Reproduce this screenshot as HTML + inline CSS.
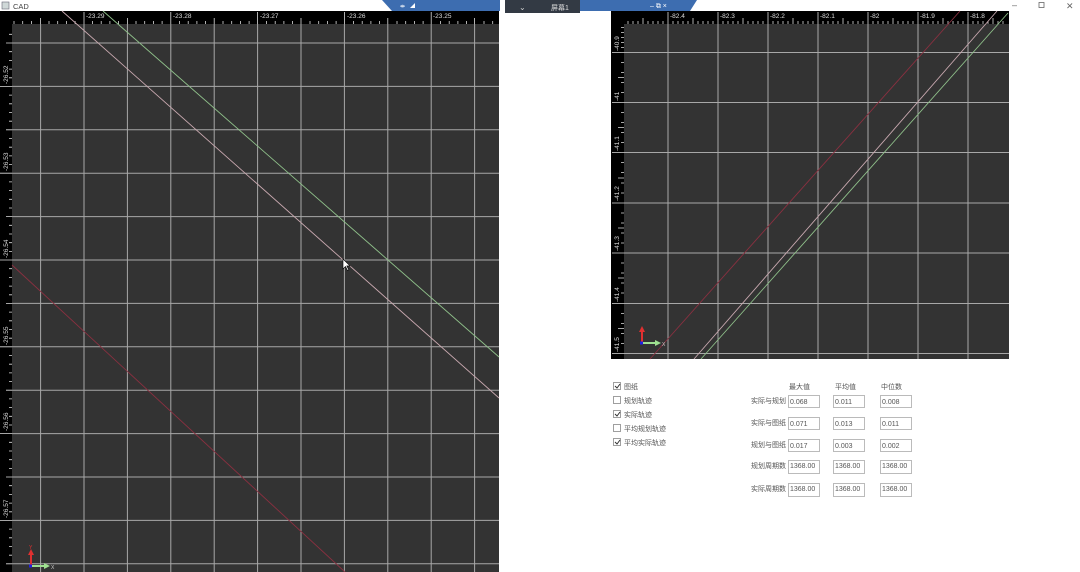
<!DOCTYPE html>
<html><head><meta charset="utf-8"><style>
html,body{margin:0;padding:0;background:#fff;width:1080px;height:572px;overflow:hidden;font-family:"Liberation Sans","Noto Sans CJK SC",sans-serif}
svg{display:block}
</style></head><body>
<svg width="1080" height="572" viewBox="0 0 1080 572" xmlns="http://www.w3.org/2000/svg" font-family="Liberation Sans, Noto Sans CJK SC, sans-serif">
<rect width="1080" height="572" fill="#fff"/>
<!-- title bar -->
<rect x="2" y="2" width="7" height="7" fill="#cfd8d8" stroke="#667" stroke-width="0.6"/>
<text x="13" y="9" font-size="7.5" fill="#444">CAD</text>
<text x="1012" y="8" font-size="9" fill="#666">–</text>
<rect x="1039" y="2.5" width="5" height="5" fill="none" stroke="#666" stroke-width="0.8"/>
<text x="1066" y="9" font-size="9" fill="#666">✕</text>

<!-- LEFT PANEL -->
<rect x="0" y="11" width="499" height="561" fill="#333"/>
<rect x="0" y="11" width="499" height="13" fill="#000"/>
<rect x="0" y="11" width="12" height="561" fill="#000"/>
<g stroke="#a8a8a8" stroke-width="1">
<path d="M40.6 24V572M84 24V572M127.4 24V572M170.8 24V572M214.2 24V572M257.6 24V572M301 24V572M344.4 24V572M387.8 24V572M431.2 24V572M474.6 24V572"/>
<path d="M12 43H499M12 86.4H499M12 129.8H499M12 173.2H499M12 216.6H499M12 260H499M12 303.4H499M12 346.8H499M12 390.2H499M12 433.6H499M12 477H499M12 520.4H499M12 563.8H499"/>
</g>
<!-- top ruler ticks -->
<g stroke="#ddd" stroke-width="0.8">
<path id="tk" d="M14 24v-3M22.7 24v-3M31.4 24v-3M40.6 24v-6M49 24v-3M57.7 24v-3M66.4 24v-3M75.1 24v-3M84 24v-12M92.5 24v-3M101.2 24v-3M109.9 24v-3M118.6 24v-3M127.4 24v-6M136 24v-3M144.7 24v-3M153.4 24v-3M162.1 24v-3M170.8 24v-12M179.5 24v-3M188.2 24v-3M196.9 24v-3M205.6 24v-3M214.2 24v-6M223 24v-3M231.7 24v-3M240.4 24v-3M249.1 24v-3M257.6 24v-12M266.5 24v-3M275.2 24v-3M283.9 24v-3M292.6 24v-3M301 24v-6M310 24v-3M318.7 24v-3M327.4 24v-3M336.1 24v-3M344.4 24v-12M353.5 24v-3M362.2 24v-3M370.9 24v-3M379.6 24v-3M387.8 24v-6M397 24v-3M405.7 24v-3M414.4 24v-3M423.1 24v-3M431.2 24v-12M440.5 24v-3M449.2 24v-3M457.9 24v-3M466.6 24v-3M474.6 24v-6M484 24v-3M492.7 24v-3"/>
<path d="M12 34.3h-3M12 43h-6M12 51.7h-3M12 60.4h-3M12 69.1h-3M12 77.8h-3M12 86.4h-12M12 95.1h-3M12 103.8h-3M12 112.5h-3M12 121.2h-3M12 129.8h-6M12 138.5h-3M12 147.2h-3M12 155.9h-3M12 164.6h-3M12 173.2h-12M12 181.9h-3M12 190.6h-3M12 199.3h-3M12 208h-3M12 216.6h-6M12 225.3h-3M12 234h-3M12 242.7h-3M12 251.4h-3M12 260h-12M12 268.7h-3M12 277.4h-3M12 286.1h-3M12 294.8h-3M12 303.4h-6M12 312.1h-3M12 320.8h-3M12 329.5h-3M12 338.2h-3M12 346.8h-12M12 355.5h-3M12 364.2h-3M12 372.9h-3M12 381.6h-3M12 390.2h-6M12 398.9h-3M12 407.6h-3M12 416.3h-3M12 425h-3M12 433.6h-12M12 442.3h-3M12 451h-3M12 459.7h-3M12 468.4h-3M12 477h-6M12 485.7h-3M12 494.4h-3M12 503.1h-3M12 511.8h-3M12 520.4h-12M12 529.1h-3M12 537.8h-3M12 546.5h-3M12 555.2h-3M12 563.8h-6"/>
</g>
<g fill="#ddd" font-size="6.5">
<text x="86" y="18">-23.29</text><text x="173" y="18">-23.28</text><text x="260" y="18">-23.27</text><text x="347" y="18">-23.26</text><text x="433" y="18">-23.25</text>
<g transform="rotate(-90)"><text x="-84" y="8">-26.52</text><text x="-171" y="8">-26.53</text><text x="-258" y="8">-26.54</text><text x="-345" y="8">-26.55</text><text x="-431" y="8">-26.56</text><text x="-518" y="8">-26.57</text></g>
</g>
<!-- lines -->
<line x1="62" y1="11" x2="499" y2="398" stroke="#c9a9b0" stroke-width="0.9"/>
<line x1="103" y1="11" x2="499" y2="357" stroke="#8fc08a" stroke-width="0.9"/>
<line x1="12" y1="265" x2="345" y2="572" stroke="#8a3040" stroke-width="0.9"/>
<!-- axis gizmo -->
<path d="M31 566V553" stroke="#e03030" stroke-width="2"/><path d="M28 555l3-6 3 6z" fill="#e03030"/>
<path d="M32 566H46" stroke="#9fe090" stroke-width="2"/><path d="M44 563l6 3-6 3z" fill="#9fe090"/>
<rect x="29" y="564.5" width="3" height="3" fill="#2020e0"/>
<text x="51" y="569" font-size="5" fill="#ccc">X</text><text x="29" y="549" font-size="5" fill="#e03030">Y</text>
<!-- cursor -->
<path d="M343 259v10l2.5-2.5 2 4 1.3-.6-2-4H350z" fill="#fff" stroke="#000" stroke-width="0.6"/>

<!-- remote bar -->
<path d="M382 0H500V11H392z" fill="#3d6db0"/>
<path d="M580 0H697L690 11H580z" fill="#3d6db0"/>
<rect x="505" y="0" width="75" height="13" fill="#333a44"/>
<text x="519" y="10" font-size="8" fill="#ccc">⌄</text>
<text x="551" y="10" font-size="7" fill="#ddd">屏幕1</text>
<text x="400" y="8" font-size="6" fill="#fff">⇹</text><path d="M410 8l5-5v5z" fill="#fff"/>
<text x="650" y="8" font-size="7" fill="#fff">–  ⧉  ×</text>

<!-- RIGHT PANEL -->
<rect x="611" y="11" width="398" height="348" fill="#333"/>
<rect x="611" y="11" width="398" height="13" fill="#000"/>
<rect x="611" y="11" width="13" height="348" fill="#000"/>
<g stroke="#a8a8a8" stroke-width="1">
<path d="M668 24V359M718 24V359M768 24V359M818 24V359M868 24V359M918 24V359M968 24V359"/>
<path d="M624 52.5H1009M624 102.5H1009M624 152.5H1009M624 203H1009M624 253H1009M624 303.5H1009M624 353.5H1009"/>
</g>
<g stroke="#ddd" stroke-width="0.8">
<path d="M628 24v-3M633 24v-3M638 24v-3M643 24v-6M648 24v-3M653 24v-3M658 24v-3M663 24v-3M668 24v-12M673 24v-3M678 24v-3M683 24v-3M688 24v-3M693 24v-6M698 24v-3M703 24v-3M708 24v-3M713 24v-3M718 24v-12M723 24v-3M728 24v-3M733 24v-3M738 24v-3M743 24v-6M748 24v-3M753 24v-3M758 24v-3M763 24v-3M768 24v-12M773 24v-3M778 24v-3M783 24v-3M788 24v-3M793 24v-6M798 24v-3M803 24v-3M808 24v-3M813 24v-3M818 24v-12M823 24v-3M828 24v-3M833 24v-3M838 24v-3M843 24v-6M848 24v-3M853 24v-3M858 24v-3M863 24v-3M868 24v-12M873 24v-3M878 24v-3M883 24v-3M888 24v-3M893 24v-6M898 24v-3M903 24v-3M908 24v-3M913 24v-3M918 24v-12M923 24v-3M928 24v-3M933 24v-3M938 24v-3M943 24v-6M948 24v-3M953 24v-3M958 24v-3M963 24v-3M968 24v-12M973 24v-3M978 24v-3M983 24v-3M988 24v-3M993 24v-6M998 24v-3M1003 24v-3"/>
<path d="M624 27.5h-3M624 32.5h-3M624 37.5h-3M624 42.5h-3M624 47.5h-3M624 52.5h-12M624 62.5h-3M624 72.5h-3M624 77.5h-6M624 82.5h-3M624 92.5h-3M624 102.5h-12M624 112.5h-3M624 122.5h-3M624 127.5h-6M624 132.5h-3M624 142.5h-3M624 152.5h-12M624 162.5h-3M624 172.5h-3M624 178h-6M624 183h-3M624 193h-3M624 203h-12M624 213h-3M624 223h-3M624 228h-6M624 233h-3M624 243h-3M624 253h-12M624 263h-3M624 273h-3M624 278h-6M624 283h-3M624 293h-3M624 303.5h-12M624 313.5h-3M624 323.5h-3M624 328.5h-6M624 333.5h-3M624 343.5h-3M624 353.5h-12"/>
</g>
<g fill="#ddd" font-size="6.5">
<text x="670" y="18">-82.4</text><text x="720" y="18">-82.3</text><text x="770" y="18">-82.2</text><text x="820" y="18">-82.1</text><text x="870" y="18">-82</text><text x="920" y="18">-81.9</text><text x="970" y="18">-81.8</text>
<g transform="rotate(-90)"><text x="-51" y="619">-40.9</text><text x="-101" y="619">-41</text><text x="-151" y="619">-41.1</text><text x="-201" y="619">-41.2</text><text x="-251" y="619">-41.3</text><text x="-302" y="619">-41.4</text><text x="-352" y="619">-41.5</text></g>
</g>
<line x1="960" y1="11" x2="650" y2="359" stroke="#8a3040" stroke-width="0.9"/>
<line x1="997" y1="11" x2="694" y2="359" stroke="#c9a9b0" stroke-width="0.9"/>
<line x1="1008" y1="13" x2="701" y2="359" stroke="#8fc08a" stroke-width="0.9"/>
<path d="M642 343V330" stroke="#e03030" stroke-width="2"/><path d="M639 332l3-6 3 6z" fill="#e03030"/>
<path d="M643 343H656" stroke="#9fe090" stroke-width="2"/><path d="M655 340l6 3-6 3z" fill="#9fe090"/>
<rect x="640" y="341.5" width="3" height="3" fill="#2020e0"/>
<text x="662" y="346" font-size="5" fill="#ccc">X</text>

<!-- checkboxes -->
<g stroke="#888" stroke-width="0.8" fill="#fff">
<rect x="613.5" y="382.5" width="7" height="7"/><rect x="613.5" y="396.5" width="7" height="7"/><rect x="613.5" y="410.5" width="7" height="7"/><rect x="613.5" y="424.5" width="7" height="7"/><rect x="613.5" y="438.5" width="7" height="7"/>
</g>
<g stroke="#333" stroke-width="1" fill="none"><path d="M615 386l2 2 3-4M615 414l2 2 3-4M615 442l2 2 3-4"/></g>
<g font-size="7" fill="#555">
<text x="624" y="389">图纸</text><text x="624" y="403">规划轨迹</text><text x="624" y="417">实际轨迹</text><text x="624" y="431">平均规划轨迹</text><text x="624" y="445">平均实际轨迹</text>
<text x="789" y="389">最大值</text><text x="835" y="389">平均值</text><text x="881" y="389">中位数</text>
<text x="751" y="403">实际与规划</text><text x="751" y="425">实际与图纸</text><text x="751" y="447">规划与图纸</text><text x="751" y="468">规划周期数</text><text x="751" y="491">实际周期数</text>
</g>
<g stroke="#aaa" stroke-width="0.8" fill="#fff">
<rect x="788.5" y="395.5" width="31" height="12"/><rect x="833.5" y="395.5" width="31" height="12"/><rect x="880.5" y="395.5" width="31" height="12"/>
<rect x="788.5" y="417.5" width="31" height="12"/><rect x="833.5" y="417.5" width="31" height="12"/><rect x="880.5" y="417.5" width="31" height="12"/>
<rect x="788.5" y="439.5" width="31" height="12"/><rect x="833.5" y="439.5" width="31" height="12"/><rect x="880.5" y="439.5" width="31" height="12"/>
<rect x="788.5" y="460.5" width="31" height="13"/><rect x="833.5" y="460.5" width="31" height="13"/><rect x="880.5" y="460.5" width="31" height="13"/>
<rect x="788.5" y="483.5" width="31" height="13"/><rect x="833.5" y="483.5" width="31" height="13"/><rect x="880.5" y="483.5" width="31" height="13"/>
</g>
<g font-size="7" fill="#555">
<text x="790" y="404">0.068</text><text x="835" y="404">0.011</text><text x="882" y="404">0.008</text>
<text x="790" y="426">0.071</text><text x="835" y="426">0.013</text><text x="882" y="426">0.011</text>
<text x="790" y="448">0.017</text><text x="835" y="448">0.003</text><text x="882" y="448">0.002</text>
<text x="790" y="468">1368.00</text><text x="835" y="468">1368.00</text><text x="882" y="468">1368.00</text>
<text x="790" y="491">1368.00</text><text x="835" y="491">1368.00</text><text x="882" y="491">1368.00</text>
</g>
</svg>
</body></html>
